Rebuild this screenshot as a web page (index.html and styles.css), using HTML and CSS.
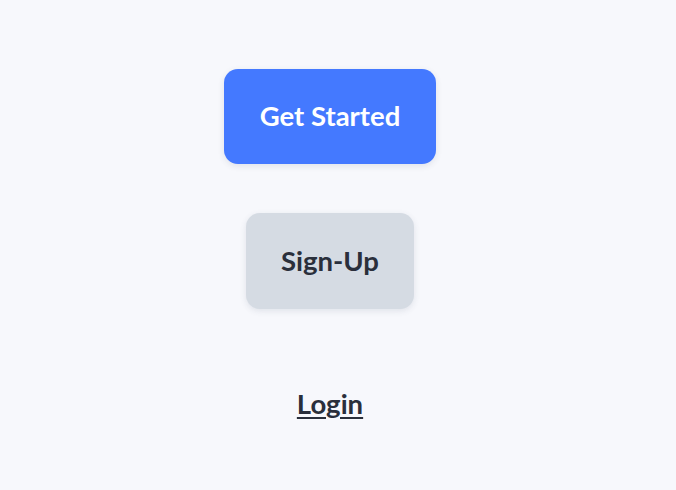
FILE: index.html
```html
<!DOCTYPE html>
<html>
<head>
<meta charset="utf-8">
<link rel="stylesheet" href="styles.css">
</head>
<body>
<main class="stack">
  <button class="btn btn-primary">Get Started</button>
  <button class="btn btn-secondary">Sign-Up</button>
  <a class="link" href="#">Login</a>
</main>
</body>
</html>
```
FILE: styles.css
```css
html, body {
  margin: 0;
  padding: 0;
  background: #f7f8fc;
  height: 100%;
}
.stack {
  width: 660px;
  display: flex;
  flex-direction: column;
  align-items: center;
  padding-top: 69px;
  font-family: "Lato", "Liberation Sans", sans-serif;
}
.btn {
  border: none;
  border-radius: 14px;
  font-family: inherit;
  font-weight: 700;
  font-size: 27.5px;
  height: 95px;
  padding: 0 0 2px;
  display: flex;
  align-items: center;
  justify-content: center;
  box-shadow: 0 2px 6px rgba(60, 70, 100, 0.12);
  cursor: pointer;
}
.btn-primary {
  width: 212px;
  background: #4479ff;
  color: #ffffff;
}
.btn-secondary {
  margin-top: 49px;
  width: 168px;
  height: 96px;
  background: #d5dbe3;
  color: #2a2f3b;
}
.link {
  margin-top: 78px;
  font-size: 27.5px;
  font-weight: 700;
  color: #2a2f3b;
  text-decoration: underline;
  text-underline-offset: 3px;
  text-decoration-thickness: 2px;
}
```
